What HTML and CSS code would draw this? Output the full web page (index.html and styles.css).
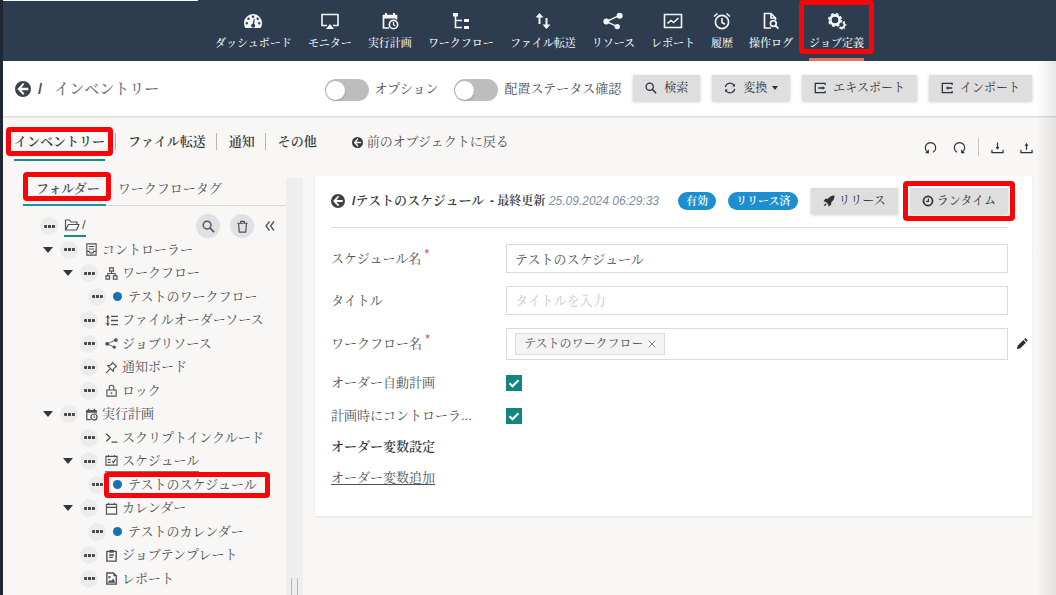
FILE: index.html
```html
<!DOCTYPE html>
<html lang="ja">
<head>
<meta charset="utf-8">
<title>インベントリー</title>
<link rel="stylesheet" href="styles.css">
</head>
<body>
<svg class="sprite" aria-hidden="true">
  <symbol id="i-gauge" viewBox="0 0 20 16"><path fill="currentColor" fill-rule="evenodd" d="M10 1a9 9 0 0 0-9 9c0 2 .5 3.700 1.400 5h15.200c.9-1.300 1.400-3 1.400-5a9 9 0 0 0-9-9zM8.800 3.800a1.200 1.200 0 1 1 2.400 0a1.200 1.200 0 1 1-2.400 0zM4.300 5.700a1.200 1.200 0 1 1 2.400 0a1.200 1.200 0 1 1-2.400 0zM2.600 10.200a1.200 1.200 0 1 1 2.400 0a1.200 1.200 0 1 1-2.400 0zM13.500 5.700a1.200 1.200 0 1 1 2.400 0a1.200 1.200 0 1 1-2.400 0zM15 10.200a1.200 1.200 0 1 1 2.400 0a1.200 1.200 0 1 1-2.400 0zM10.800 6l1 .2-.7 4.700a2 2 0 1 1-1.400-.2z"/></symbol>
  <symbol id="i-monitor" viewBox="0 0 20 18"><path fill="none" stroke="currentColor" stroke-width="1.600" d="M7 13.500H2V2.500h16v11h-5"/><path fill="currentColor" d="M6 17l4-5 4 5z"/></symbol>
  <symbol id="i-plan" viewBox="0 0 18 18"><path fill="none" stroke="currentColor" stroke-width="1.700" d="M8 16H2.500V3.500h13v4"/><path fill="currentColor" d="M2 3h14v3.500H2zM4 1h2v3H4zM12 1h2v3h-2z"/><circle cx="12.500" cy="12.500" r="4.200" fill="none" stroke="currentColor" stroke-width="1.700"/><path fill="none" stroke="currentColor" stroke-width="1.300" d="M12.500 10v2.700l1.800 1"/></symbol>
  <symbol id="i-tree" viewBox="0 0 18 18"><path fill="currentColor" d="M1 1h5v3.500H1zM12 7h5v3h-5zM12 14h5v3h-5z"/><path fill="none" stroke="currentColor" stroke-width="1.600" d="M3.500 4v11.500H10M3.500 8.500H10"/></symbol>
  <symbol id="i-transfer" viewBox="0 0 18 18"><path fill="none" stroke="currentColor" stroke-width="2" d="M5.500 4v8M12.500 6v8"/><path fill="currentColor" d="M1.500 5.500l4-4.500 4 4.500zM8.500 12.500h8l-4 4.500z"/></symbol>
  <symbol id="i-share" viewBox="0 0 18 16"><path fill="none" stroke="currentColor" stroke-width="1.200" d="M15 3L3 8.500l10 4.500"/><circle cx="15" cy="3.300" r="2.700" fill="currentColor"/><circle cx="3" cy="8.500" r="2.700" fill="currentColor"/><circle cx="12.800" cy="13" r="2.400" fill="currentColor"/></symbol>
  <symbol id="i-chart" viewBox="0 0 20 16"><path fill="none" stroke="currentColor" stroke-width="1.600" d="M1.500 1.500h17v13h-17zM4.500 10.500l3.500-3 2.500 2 5-4.500"/></symbol>
  <symbol id="i-alarm" viewBox="0 0 18 18"><circle cx="9" cy="10" r="6.600" fill="none" stroke="currentColor" stroke-width="1.600"/><path fill="none" stroke="currentColor" stroke-width="1.600" d="M1 4.500L4.500 1.500M17 4.500l-3.500-3M9 6v4.500l3 1.800"/></symbol>
  <symbol id="i-audit" viewBox="0 0 18 18"><path fill="none" stroke="currentColor" stroke-width="1.700" d="M9 16H2.500V1.500H9l4.500 4.500v2M9 1.500V6h4.500"/><circle cx="11.300" cy="11.500" r="2.900" fill="none" stroke="currentColor" stroke-width="1.600"/><path stroke="currentColor" stroke-width="1.800" d="M13.300 13.500l3.200 3.200"/></symbol>
  <symbol id="i-gears" viewBox="0 0 20 18"><circle cx="8" cy="8" r="4.600" fill="none" stroke="currentColor" stroke-width="2.600"/><circle cx="8" cy="8" r="6.300" fill="none" stroke="currentColor" stroke-width="1.600" stroke-dasharray="2.800 2.150"/><path fill="none" stroke="currentColor" stroke-width="2" d="M15.700 10.200a3 3 0 1 1-3.200 5"/><path fill="none" stroke="currentColor" stroke-width="1.400" d="M17.600 9.300l-.7 1M19.500 13h-1.300M17.800 16.600l-1-.9M14.800 17.500v-1.500"/></symbol>
  <symbol id="i-back" viewBox="0 0 16 16"><path fill="currentColor" fill-rule="evenodd" d="M8 0a8 8 0 1 1 0 16A8 8 0 0 1 8 0zM9.300 3L8 1.900 2.400 8 8 14l1.500-1.400L6.300 9.200h7V6.800h-7z"/></symbol>
  <symbol id="i-search" viewBox="0 0 14 14"><circle cx="5.500" cy="5.500" r="4.200" fill="none" stroke="currentColor" stroke-width="1.500"/><path stroke="currentColor" stroke-width="1.700" d="M8.500 8.500l4.500 4.500"/></symbol>
  <symbol id="i-sync" viewBox="0 0 14 14"><path fill="none" stroke="currentColor" stroke-width="1.300" d="M1.500 6a5.600 5.600 0 0 1 10.300-2M12.500 8a5.600 5.600 0 0 1-10.300 2"/><path fill="currentColor" d="M12.800 2v3.300H9.500zM1.200 12V8.700h3.300z"/></symbol>
  <symbol id="i-export" viewBox="0 0 14 14"><path fill="none" stroke="currentColor" stroke-width="1.500" d="M13 3.500V1.500H1.500v11H13v-2M5 7h6"/><path fill="currentColor" d="M10 5l3 2-3 2z"/></symbol>
  <symbol id="i-import" viewBox="0 0 14 14"><path fill="none" stroke="currentColor" stroke-width="1.500" d="M13 3.500V1.500H1.500v11H13v-2M7 7h6"/><path fill="currentColor" d="M8.500 5l-3 2 3 2z"/></symbol>
  <symbol id="i-undo" viewBox="0 0 14 14"><path fill="none" stroke="currentColor" stroke-width="1.300" d="M4.300 12.200a5.600 5.600 0 1 1 5.400 0M4.600 9.500v3H1.800"/></symbol>
  <symbol id="i-redo" viewBox="0 0 14 14"><path fill="none" stroke="currentColor" stroke-width="1.300" d="M4.300 12.200a5.600 5.600 0 1 1 5.400 0M9.400 9.500v3h2.800"/></symbol>
  <symbol id="i-down" viewBox="0 0 14 14"><path fill="none" stroke="currentColor" stroke-width="1.300" d="M1 9.500v3h12v-3M7 1.500v7"/><path fill="currentColor" d="M5 6.500h4L7 9.500z"/></symbol>
  <symbol id="i-up" viewBox="0 0 14 14"><path fill="none" stroke="currentColor" stroke-width="1.300" d="M1 9.500v3h12v-3M7 3.500v6"/><path fill="currentColor" d="M5 5h4L7 2z"/></symbol>
  <symbol id="i-folder" viewBox="0 0 16 14"><path fill="none" stroke="currentColor" stroke-width="1.200" stroke-linejoin="round" d="M1.500 12V2h4l1.500 2h6v2.500M1.500 12l3-5.500h10.500L12.500 12z"/></symbol>
  <symbol id="i-trash" viewBox="0 0 14 14"><path fill="none" stroke="currentColor" stroke-width="1.300" stroke-linejoin="round" d="M1.500 3.500h11M5 3V1.500h4V3M2.800 4l.7 9h7l.7-9"/></symbol>
  <symbol id="i-collapse" viewBox="0 0 12 12"><path fill="none" stroke="currentColor" stroke-width="1.300" d="M5.500 1.500L2 6l3.500 4.500M10 1.500L6.500 6l3.500 4.500"/></symbol>
  <symbol id="i-server" viewBox="0 0 14 14"><path fill="none" stroke="currentColor" stroke-width="1.200" d="M2 1h10v12H2zM4 3.800h6M4 6.500h6M2 9h2.500c0 2.500 5 2.500 5 0H12"/></symbol>
  <symbol id="i-flow" viewBox="0 0 14 14"><path fill="none" stroke="currentColor" stroke-width="1.200" d="M5 1h4v3.500H5zM1 9.500h4V13H1zM9 9.500h4V13H9zM7 4.500V7M3 9.500V7h8v2.500"/></symbol>
  <symbol id="i-order" viewBox="0 0 14 14"><path fill="none" stroke="currentColor" stroke-width="1.400" d="M3 2v10M6.500 2.500H14M6.500 7H14M6.500 11.500H14"/><path fill="currentColor" d="M.7 4L3 1l2.300 3zM.7 10L3 13l2.300-3z"/></symbol>
  <symbol id="i-pin" viewBox="0 0 14 14"><path fill="none" stroke="currentColor" stroke-width="1.200" stroke-linejoin="round" d="M8 1.500L12.500 6l-1.500.6-1.800 2 -.2 2.600L2.800 5l2.700-.2 2-1.800zM5.500 8.500L1 13"/></symbol>
  <symbol id="i-lock" viewBox="0 0 14 14"><path fill="none" stroke="currentColor" stroke-width="1.200" d="M2 6.500h10V13H2zM4.500 6.500V3.800a2.500 2.500 0 0 1 5 0v2.700"/><circle cx="7" cy="9.800" r="1" fill="currentColor"/></symbol>
  <symbol id="i-script" viewBox="0 0 14 14"><path fill="none" stroke="currentColor" stroke-width="1.500" d="M1.500 3l4 4-4 4M7 12h6.500"/></symbol>
  <symbol id="i-schedule" viewBox="0 0 14 14"><path fill="none" stroke="currentColor" stroke-width="1.200" d="M1 2.500h12V12H1zM3.800 1v2.500M10.200 1v2.500M3 6h3M3 9h3M7.500 7.500l1.500 2 2.500-4"/></symbol>
  <symbol id="i-calendar" viewBox="0 0 14 14"><path fill="none" stroke="currentColor" stroke-width="1.200" d="M1.500 2.500h11v10.500h-11zM1.500 5.800h11M4 .7v2.500M10 .7v2.500"/></symbol>
  <symbol id="i-template" viewBox="0 0 14 14"><path fill="none" stroke="currentColor" stroke-width="1.500" d="M2 2.500h10V13H2zM4.500 6.500h5M4.500 9h4"/><path fill="currentColor" d="M4.500 1h5v3h-5z"/></symbol>
  <symbol id="i-image" viewBox="0 0 14 14"><path fill="none" stroke="currentColor" stroke-width="1.500" d="M2 1h7l3.200 3.200V13H2z"/><path fill="currentColor" d="M9 1v3.500h3.500zM3 11.500l2-3 1.500 1.300L9 7l2.200 4.500z"/><circle cx="4.800" cy="5.500" r="1.300" fill="currentColor"/></symbol>
  <symbol id="i-rocket" viewBox="0 0 14 14"><path fill="currentColor" d="M13.500.5C9.500.5 7.500 2 5.600 4.300L2.700 4.500.5 7.700l2.700.3L6 10.800l.3 2.700 3.200-2.200.2-2.900C12 6.500 13.500 4.500 13.500.5zM2.500 9.500L.8 13.200l3.700-1.700z"/></symbol>
  <symbol id="i-clock" viewBox="0 0 14 14"><circle cx="7" cy="7" r="5.300" fill="none" stroke="currentColor" stroke-width="2"/><path fill="none" stroke="currentColor" stroke-width="1.400" d="M7.500 4v3.500H4.800"/></symbol>
  <symbol id="i-pencil" viewBox="0 0 14 14"><path fill="currentColor" d="M1 13l.9-4L8.500 2.400l3.100 3.100L5 12.100zM9.300 1.600l1.100-1c.3-.3.700-.3 1 0l2 2c.3.300.3.700 0 1l-1 1.100z"/></symbol>
  <symbol id="i-check" viewBox="0 0 16 16"><path fill="none" stroke="#fff" stroke-width="2.200" d="M3.500 8.200l3 3 6-6"/></symbol>
  <symbol id="i-close" viewBox="0 0 8 8"><path fill="none" stroke="currentColor" stroke-width="1" d="M.5.5l7 7M7.500.5l-7 7"/></symbol>
</svg>

<div class="app">
  <header class="topbar">
    <nav class="nav">
      <a class="nav-item" href="#"><svg class="nav-icon"><use href="#i-gauge"/></svg>ダッシュボード</a>
      <a class="nav-item" href="#"><svg class="nav-icon"><use href="#i-monitor"/></svg>モニター</a>
      <a class="nav-item" href="#"><svg class="nav-icon"><use href="#i-plan"/></svg>実行計画</a>
      <a class="nav-item" href="#"><svg class="nav-icon"><use href="#i-tree"/></svg>ワークフロー</a>
      <a class="nav-item" href="#"><svg class="nav-icon"><use href="#i-transfer"/></svg>ファイル転送</a>
      <a class="nav-item" href="#"><svg class="nav-icon"><use href="#i-share"/></svg>リソース</a>
      <a class="nav-item" href="#"><svg class="nav-icon"><use href="#i-chart"/></svg>レポート</a>
      <a class="nav-item" href="#"><svg class="nav-icon"><use href="#i-alarm"/></svg>履歴</a>
      <a class="nav-item" href="#"><svg class="nav-icon"><use href="#i-audit"/></svg>操作ログ</a>
      <a class="nav-item active marked mark-nav" href="#"><svg class="nav-icon"><use href="#i-gears"/></svg>ジョブ定義</a>
    </nav>
  </header>

  <div class="toolbar">
    <a class="back" href="#" aria-label="戻る"><svg class="icon16"><use href="#i-back"/></svg></a>
    <span class="slash">/</span>
    <h1 class="title">インベントリー</h1>
    <label class="toggle"><input class="switch" type="checkbox">オプション</label>
    <label class="toggle"><input class="switch" type="checkbox">配置ステータス確認</label>
    <div class="actions">
      <button class="btn" type="button"><svg class="icon12"><use href="#i-search"/></svg>検索</button>
      <button class="btn" type="button"><svg class="icon12"><use href="#i-sync"/></svg>変換<span class="caret"></span></button>
      <button class="btn" type="button"><svg class="icon12"><use href="#i-export"/></svg>エキスポート</button>
      <button class="btn" type="button"><svg class="icon12"><use href="#i-import"/></svg>インポート</button>
    </div>
  </div>

  <div class="subbar">
    <nav class="tabs">
      <a class="tab current marked mark-tab" href="#">インベントリー</a>
      <a class="tab" href="#">ファイル転送</a>
      <a class="tab" href="#">通知</a>
      <a class="tab" href="#">その他</a>
    </nav>
    <a class="prev" href="#"><svg class="icon11"><use href="#i-back"/></svg>前のオブジェクトに戻る</a>
    <div class="tools">
      <button class="tool" type="button" aria-label="元に戻す"><svg class="icon13"><use href="#i-undo"/></svg></button>
      <button class="tool" type="button" aria-label="やり直す"><svg class="icon13"><use href="#i-redo"/></svg></button>
      <span class="divider"></span>
      <button class="tool" type="button" aria-label="ダウンロード"><svg class="icon13"><use href="#i-down"/></svg></button>
      <button class="tool" type="button" aria-label="アップロード"><svg class="icon13"><use href="#i-up"/></svg></button>
    </div>
  </div>

  <div class="main">
    <aside class="sidebar">
      <nav class="side-tabs">
        <a class="side-tab current marked mark-folder" href="#">フォルダー</a>
        <a class="side-tab" href="#">ワークフロータグ</a>
      </nav>
      <div class="root">
        <button class="dots" type="button" aria-label="メニュー"></button>
        <a class="root-link" href="#"><svg class="root-icon"><use href="#i-folder"/></svg>/</a>
        <div class="root-actions">
          <button class="round" type="button" aria-label="検索"><svg class="icon13"><use href="#i-search"/></svg></button>
          <button class="round" type="button" aria-label="ゴミ箱"><svg class="icon13"><use href="#i-trash"/></svg></button>
          <button class="tool" type="button" aria-label="折りたたむ"><svg class="icon12"><use href="#i-collapse"/></svg></button>
        </div>
      </div>
      <ul class="tree">
        <li class="node l1"><span class="arrow"></span><button class="dots" type="button" aria-label="メニュー"></button><span class="name"><svg class="icon13"><use href="#i-server"/></svg>コントローラー</span></li>
        <li class="node l2"><span class="arrow"></span><button class="dots" type="button" aria-label="メニュー"></button><span class="name"><svg class="icon13"><use href="#i-flow"/></svg>ワークフロー</span></li>
        <li class="node l3"><button class="dots" type="button" aria-label="メニュー"></button><span class="name"><span class="bullet"></span>テストのワークフロー</span></li>
        <li class="node l2"><span class="arrow none"></span><button class="dots" type="button" aria-label="メニュー"></button><span class="name"><svg class="icon13"><use href="#i-order"/></svg>ファイルオーダーソース</span></li>
        <li class="node l2"><span class="arrow none"></span><button class="dots" type="button" aria-label="メニュー"></button><span class="name"><svg class="icon13"><use href="#i-share"/></svg>ジョブリソース</span></li>
        <li class="node l2"><span class="arrow none"></span><button class="dots" type="button" aria-label="メニュー"></button><span class="name"><svg class="icon13"><use href="#i-pin"/></svg>通知ボード</span></li>
        <li class="node l2"><span class="arrow none"></span><button class="dots" type="button" aria-label="メニュー"></button><span class="name"><svg class="icon13"><use href="#i-lock"/></svg>ロック</span></li>
        <li class="node l1"><span class="arrow"></span><button class="dots" type="button" aria-label="メニュー"></button><span class="name"><svg class="icon13"><use href="#i-plan"/></svg>実行計画</span></li>
        <li class="node l2"><span class="arrow none"></span><button class="dots" type="button" aria-label="メニュー"></button><span class="name"><svg class="icon13"><use href="#i-script"/></svg>スクリプトインクルード</span></li>
        <li class="node l2"><span class="arrow"></span><button class="dots" type="button" aria-label="メニュー"></button><span class="name open"><svg class="icon13"><use href="#i-schedule"/></svg>スケジュール</span></li>
        <li class="node l3"><button class="dots" type="button" aria-label="メニュー"></button><span class="name marked mark-node"><span class="bullet"></span>テストのスケジュール</span></li>
        <li class="node l2"><span class="arrow"></span><button class="dots" type="button" aria-label="メニュー"></button><span class="name"><svg class="icon13"><use href="#i-calendar"/></svg>カレンダー</span></li>
        <li class="node l3"><button class="dots" type="button" aria-label="メニュー"></button><span class="name"><span class="bullet"></span>テストのカレンダー</span></li>
        <li class="node l2"><span class="arrow none"></span><button class="dots" type="button" aria-label="メニュー"></button><span class="name"><svg class="icon13"><use href="#i-template"/></svg>ジョブテンプレート</span></li>
        <li class="node l2"><span class="arrow none"></span><button class="dots" type="button" aria-label="メニュー"></button><span class="name"><svg class="icon13"><use href="#i-image"/></svg>レポート</span></li>
      </ul>
    </aside>
    <div class="splitter"><span class="grip"></span></div>

    <main class="content">
      <section class="panel">
        <div class="panel-head">
          <a class="back" href="#" aria-label="戻る"><svg class="icon14"><use href="#i-back"/></svg></a>
          <h2 class="path">/テストのスケジュール <span class="updated">- 最終更新</span> <em class="date">25.09.2024 06:29:33</em></h2>
          <span class="badge">有効</span>
          <span class="badge">リリース済</span>
          <div class="actions">
            <button class="btn" type="button"><svg class="icon12"><use href="#i-rocket"/></svg>リリース</button>
            <button class="btn marked mark-run" type="button"><svg class="icon12"><use href="#i-clock"/></svg>ランタイム</button>
          </div>
        </div>
        <form class="form">
          <label class="label" for="name">スケジュール名<span class="req">*</span></label>
          <input class="field" id="name" type="text" value="テストのスケジュール">
          <label class="label" for="ttl">タイトル</label>
          <input class="field" id="ttl" type="text" placeholder="タイトルを入力">
          <span class="label">ワークフロー名<span class="req">*</span></span>
          <div class="field chips">
            <span class="chip">テストのワークフロー<button class="chip-x" type="button" aria-label="削除"><svg class="icon8"><use href="#i-close"/></svg></button></span>
            <button class="edit" type="button" aria-label="編集"><svg class="icon12"><use href="#i-pencil"/></svg></button>
          </div>
          <label class="label" for="auto">オーダー自動計画</label>
          <span class="checkbox"><input class="check" id="auto" type="checkbox" checked><svg class="tick"><use href="#i-check"/></svg></span>
          <label class="label" for="ctl">計画時にコントローラ...</label>
          <span class="checkbox"><input class="check" id="ctl" type="checkbox" checked><svg class="tick"><use href="#i-check"/></svg></span>
        </form>
        <h3 class="section">オーダー変数設定</h3>
        <a class="add" href="#">オーダー変数追加</a>
      </section>
    </main>
  </div>
</div>
</body>
</html>
```
FILE: styles.css
```css
* { box-sizing: border-box; }

body {
  margin: 0;
  font-family: "Liberation Sans", "Noto Serif CJK JP", "Noto Sans CJK JP", serif;
  font-size: 13px;
  line-height: 20px;
  color: #4d5257;
  background: #f8f7f6;
}

a { color: inherit; text-decoration: none; }
button { font: inherit; color: inherit; border: 0; padding: 0; background: none; }
h1, h2, h3, ul { margin: 0; padding: 0; }
.sprite { display: none; }

.icon8 { width: 8px; height: 8px; }
.icon11 { width: 11px; height: 11px; }
.icon12 { width: 12px; height: 12px; }
.icon13 { width: 13px; height: 13px; }
.icon14 { width: 14px; height: 14px; }
.icon16 { width: 16px; height: 16px; }
svg { flex: none; }

.app {
  position: relative;
  display: flex;
  flex-direction: column;
  min-height: 100vh;
  border-left: 3px solid #1f2733;
}
.app::after {
  content: "";
  position: absolute;
  inset: 61px 0 0 auto;
  width: 20px;
  background: linear-gradient(to right, rgba(0, 0, 0, 0), rgba(0, 0, 0, 0.09));
  pointer-events: none;
}

/* Highlight frames around the steps of the guide */
.marked { position: relative; }
.marked::before {
  content: "";
  position: absolute;
  border: 5px solid #f60509;
  border-radius: 4px;
  z-index: 2;
  pointer-events: none;
}
.mark-nav::before { inset: 0 -10px 4px; }
.mark-tab::before { inset: 0 -8px 3px; }
.mark-folder::before { inset: -4px -5px 3px 0; }
.mark-node::before { inset: -2px -13px -2px -3px; }
.mark-run::before { inset: -7px; }

.topbar {
  background: #2d3c4f;
  color: #f4f6f8;
}
.topbar::before {
  content: "";
  position: absolute;
  top: 0;
  left: 0;
  width: 195px;
  height: 1px;
  background: #f4f6f8;
}
.nav {
  display: flex;
  justify-content: center;
  gap: 16px;
  padding-left: 20px;
}
.nav-item {
  display: flex;
  flex-direction: column;
  align-items: center;
  height: 61px;
  padding-top: 12px;
  font-size: 11px;
  font-weight: 500;
  white-space: nowrap;
  border-bottom: 3px solid transparent;
}
.nav-item.active { border-bottom-color: #e8705f; }
.nav-icon { width: 20px; height: 18px; margin-bottom: 3px; }

.toolbar {
  display: flex;
  align-items: center;
  height: 55px;
  padding: 0 24px 0 12px;
  background: #fff;
  box-shadow: 0 1px 2px rgba(0, 0, 0, 0.15);
}
.back { display: flex; color: #3d4247; }
.slash { margin-left: 7px; font-size: 15px; font-weight: 700; }
.title { margin: 0 auto 0 12px; font-size: 15px; font-weight: 500; color: #6a6e72; }
.toggle { display: flex; align-items: center; gap: 6px; margin-right: 16px; white-space: nowrap; }
.toggle + .toggle { margin-right: 12px; }
.switch {
  appearance: none;
  width: 44px;
  height: 22px;
  margin: 2px 0 0;
  border-radius: 11px;
  background: #bdbdbd;
}
.switch::before {
  content: "";
  display: block;
  width: 19px;
  height: 19px;
  margin: 2px 1px;
  border-radius: 50%;
  background: #fff;
  box-shadow: 0 1px 2px rgba(0, 0, 0, 0.2);
}
.actions { display: flex; gap: 12px; }
.toolbar .actions { margin-bottom: 1px; }
.btn {
  display: flex;
  align-items: center;
  gap: 7px;
  height: 26px;
  padding: 0 12px;
  font-size: 12px;
  color: #2e3135;
  background: #dedede;
  box-shadow: 0 1px 3px rgba(0, 0, 0, 0.2);
  white-space: nowrap;
}
.caret {
  border: 3px solid transparent;
  border-top: 4px solid currentColor;
  border-bottom: 0;
  margin-left: -2px;
}

.subbar {
  display: flex;
  align-items: flex-start;
  height: 60px;
  padding: 11px 23px 0 11px;
}
.tabs { display: flex; font-weight: 600; color: #33383d; }
.tab {
  position: relative;
  height: 34px;
  padding-top: 5px;
  margin-right: 23px;
  white-space: nowrap;
}
.tab.current { border-bottom: 2px solid #1b8a80; }
.tab:not(:last-child)::after {
  content: "";
  position: absolute;
  top: 6px;
  right: -11px;
  width: 1px;
  height: 17px;
  background: #b5b5b5;
}
.prev { display: flex; align-items: center; gap: 4px; padding-top: 5px; margin-left: 12px; }
.prev svg { color: #33383d; }
.tools { display: flex; align-items: center; gap: 16px; margin: 11px 0 0 auto; color: #2e3135; }
.tool { display: flex; }
.divider { width: 1px; height: 18px; background: #c5c5c5; margin: 0 -4px; }

.main { display: flex; flex: 1; align-items: stretch; }
.sidebar { width: 283px; flex: none; padding-left: 20px; }
.side-tabs { display: flex; border-bottom: 1px solid #d9d9d9; margin-bottom: 8px; }
.side-tab { height: 29px; padding: 3px 0 0; margin: 0 0 0 12px; }
.side-tab.current {
  margin: 0 0 -1px;
  padding: 3px 6px 0 13px;
  height: 30px;
  font-weight: 600;
  border-bottom: 2px solid #2a8a9c;
}
.root { display: flex; align-items: center; height: 24px; padding: 0 10px 0 17px; }
.root-link {
  display: flex;
  align-items: center;
  gap: 2px;
  height: 22px;
  margin-left: 6px;
  border-bottom: 2px solid #1b8a80;
}
.root-icon { width: 16px; height: 14px; }
.root-actions { display: flex; align-items: center; gap: 10px; margin-left: auto; }
.round {
  display: flex;
  align-items: center;
  justify-content: center;
  width: 24px;
  height: 24px;
  border-radius: 50%;
  background: #dfe1e4;
}
.dots {
  display: flex;
  align-items: center;
  justify-content: center;
  width: 18px;
  height: 18px;
  flex: none;
  border-radius: 50%;
  background: #ececec;
}
.dots::before {
  content: "";
  width: 11px;
  height: 3px;
  border-radius: 1px;
  background: repeating-linear-gradient(to right, #45484c 0 3px, transparent 3px 4px);
}
.tree {
  display: grid;
  grid-auto-rows: 23px 24px;
  list-style: none;
}
.node { display: flex; align-items: center; white-space: nowrap; }
.l1 { padding-left: 20px; }
.l2 { padding-left: 40px; }
.l3 { padding-left: 65px; }
.arrow {
  width: 10px;
  border: 5px solid transparent;
  border-top: 6px solid #33363a;
  border-bottom: 0;
  margin-right: 7px;
}
.arrow.none { border-top-color: transparent; }
.name { display: flex; align-items: center; gap: 4px; margin-left: 7px; height: 22px; }
.l3 .name { gap: 6px; margin-left: 1px; padding-left: 6px; }
.open { border-bottom: 1px solid #7a7a7a; }
.bullet { width: 9px; height: 9px; border-radius: 50%; background: #1670ae; }

.splitter {
  display: flex;
  align-items: flex-end;
  justify-content: center;
  width: 17px;
  flex: none;
  margin-top: 2px;
  background: #eeeeee;
}
.grip {
  width: 7px;
  height: 17px;
  border: 1px solid #b8b8b8;
  border-width: 0 1px;
}

.content { flex: 1; min-width: 0; padding: 0 24px 0 12px; }
.panel {
  padding: 12px 24px 28px 16px;
  background: #fff;
  box-shadow: 0 1px 2px rgba(0, 0, 0, 0.08);
}
.panel-head {
  display: flex;
  align-items: center;
  padding-bottom: 13px;
  border-bottom: 1px solid #dcdcdc;
}
.path { margin-left: 7px; font-size: 13px; font-weight: 600; color: #33383d; white-space: nowrap; }
.updated { margin-left: 2px; font-size: 12px; }
.date { font-size: 12px; font-weight: 400; color: #7d8fa6; }
.badge {
  margin-left: 12px;
  padding: 0 8px;
  font-size: 11px;
  font-weight: 600;
  line-height: 18px;
  border-radius: 9px;
  color: #fff;
  background: #1d8fd1;
  white-space: nowrap;
}
.path + .badge { margin-left: 19px; }
.panel-head .actions { margin-left: auto; }
.panel-head .btn { gap: 3px; }

.form {
  display: grid;
  grid-template-columns: 175px 1fr;
  gap: 13px 0;
  align-items: center;
  padding-top: 16px;
}
.label { height: 20px; white-space: nowrap; }
.req { margin-left: 3px; color: #e8464f; vertical-align: 5px; line-height: 10px; }
.field {
  width: 100%;
  height: 29px;
  padding: 0 8px;
  font: inherit;
  color: inherit;
  background: #fff;
  border: 1px solid #dadada;
}
.field::placeholder { color: #c9c9c9; }
.chips { position: relative; display: flex; align-items: center; height: 32px; }
.chip {
  display: flex;
  align-items: center;
  gap: 4px;
  height: 22px;
  padding: 0 8px;
  font-size: 12px;
  background: #f4f4f4;
  border: 1px solid #dadada;
}
.chip-x { display: flex; color: #8a8a8a; }
.edit { position: absolute; right: -21px; top: 9px; display: flex; color: #2e3135; }
.checkbox { position: relative; display: flex; align-items: center; height: 20px; }
.check {
  appearance: none;
  width: 16px;
  height: 16px;
  margin: 0;
  border: 1px solid #128580;
  background: #fff;
}
.check:checked { background: #128580; }
.tick {
  position: absolute;
  left: 0;
  width: 16px;
  height: 16px;
  pointer-events: none;
}
.section { margin-top: 11px; font-size: 13px; font-weight: 600; color: #33383d; }
.add { display: table; margin-top: 11px; line-height: 20px; text-decoration: underline; text-underline-offset: 2px; }
```
